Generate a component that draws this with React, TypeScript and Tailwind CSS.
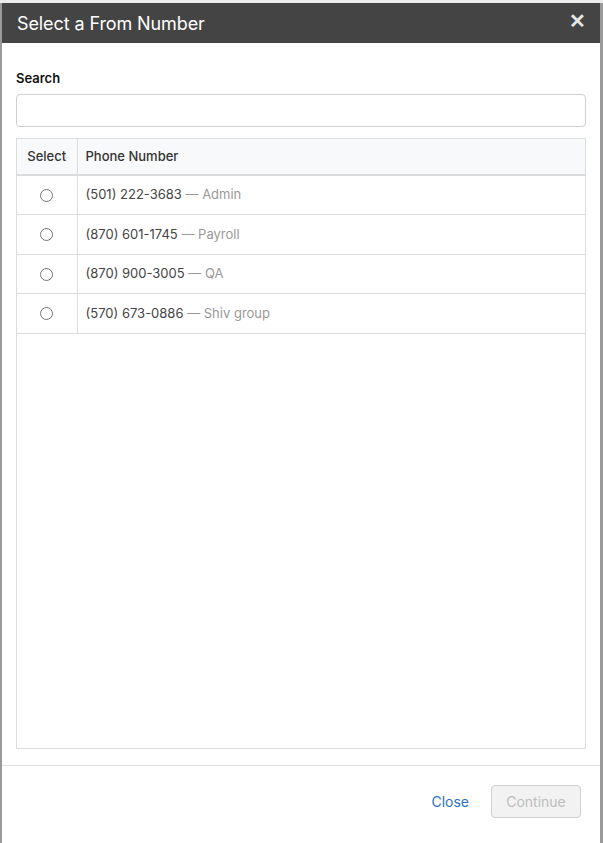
import React from "react";

const rows = [
  { num: "(501) 222-3683", label: "Admin" },
  { num: "(870) 601-1745", label: "Payroll" },
  { num: "(870) 900-3005", label: "QA" },
  { num: "(570) 673-0886", label: "Shiv group" },
];

export default function App() {
  return (
    <div
      className="w-[603px] h-[843px] bg-[#9a9a9a] relative overflow-hidden"
      style={{ fontFamily: "Inter, 'Noto Sans', sans-serif" }}
    >
      <div className="h-[3px] bg-[#ececec] w-full" />
      <div className="ml-[2px] w-[598px] h-[840px] bg-white flex flex-col">
        <div className="h-[40px] bg-[#444444] flex items-center justify-between pl-[15px] pr-[14px] shrink-0">
          <span className="text-white text-[18px] tracking-[-0.1px]">Select a From Number</span>
          <span className="text-[#e6e6e6] text-[20px] font-bold leading-none -mt-[4px]">✕</span>
        </div>
        <div className="flex-1 flex flex-col px-[14px] pt-[27px] pb-[16px]">
          <label className="text-[13px] font-semibold text-[#111] leading-[16px] mb-[8px]">Search</label>
          <input className="h-[33px] border border-[#cfcfcf] rounded-[4px] w-full outline-none" />
          <div className="mt-[11px] flex-1 border border-[#dcdcdc]">
            <table className="w-full border-collapse text-[13px]">
              <thead>
                <tr className="bg-[#f8f9fa] h-[36px] border-b-2 border-[#dcdcdc]">
                  <th className="w-[60px] font-medium text-[#333] text-center border-r border-[#dcdcdc]">Select</th>
                  <th className="font-medium text-[#333] text-left pl-[8px]">Phone Number</th>
                </tr>
              </thead>
              <tbody>
                {rows.map((r) => (
                  <tr key={r.num} className="h-[39.5px] border-b border-[#dcdcdc]">
                    <td className="text-center border-r border-[#dcdcdc]">
                      <span className="inline-block w-[13px] h-[13px] rounded-full border border-[#767676] align-middle" />
                    </td>
                    <td className="pl-[8px] text-[#444]">
                      {r.num} <span className="text-[#999]">— {r.label}</span>
                    </td>
                  </tr>
                ))}
              </tbody>
            </table>
          </div>
        </div>
        <div className="h-[78px] border-t border-[#dedede] flex items-start justify-end pt-[19px] pr-[19px] shrink-0">
          <span className="text-[#2c6fc4] text-[14px] mr-[22px] leading-[33px]">Close</span>
          <button className="h-[33px] w-[90px] rounded-[4px] border border-[#cfcfcf] bg-[#f2f2f2] text-[#bdbdbd] text-[14px]">
            Continue
          </button>
        </div>
      </div>
    </div>
  );
}
